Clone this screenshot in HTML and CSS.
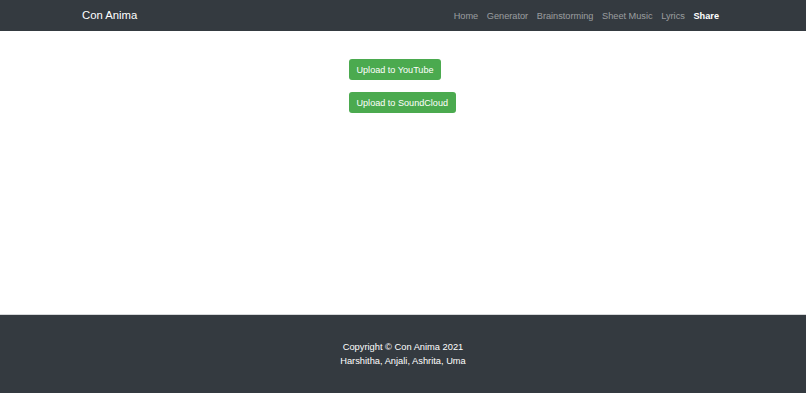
FILE: index.html
```html
<!DOCTYPE html>
<html lang="en">
<head>
    <meta charset="UTF-8">
    <meta name="viewport" content="width=device-width, initial-scale=1.0">
    <title>Con Anima - Share</title>
    <link rel="stylesheet" href="styles.css">
</head>
<body>
    <nav class="navbar">
        <div class="nav-inner">
            <a class="brand" href="#">Con Anima</a>
            <ul class="nav-links">
                <li><a href="#">Home</a></li>
                <li><a href="#">Generator</a></li>
                <li><a href="#">Brainstorming</a></li>
                <li><a href="#">Sheet Music</a></li>
                <li><a href="#">Lyrics</a></li>
                <li><a class="active" href="#">Share</a></li>
            </ul>
        </div>
    </nav>

    <main class="content">
        <div class="share-buttons">
            <button class="btn-upload">Upload to YouTube</button>
            <button class="btn-upload">Upload to SoundCloud</button>
        </div>
    </main>

    <footer class="footer">
        <p>Copyright &copy; Con Anima 2021</p>
        <p>Harshitha, Anjali, Ashrita, Uma</p>
    </footer>
</body>
</html>
```

FILE: styles.css
```css
html, body {
    height: 100%;
}

body {
    font-family: 'Liberation Sans', Arial, sans-serif;
    margin: 0;
    display: flex;
    flex-direction: column;
    background-color: #ffffff;
}

.navbar {
    background-color: #343a40;
    height: 31px;
    flex-shrink: 0;
}

.nav-inner {
    height: 100%;
    display: flex;
    align-items: center;
    justify-content: space-between;
    padding: 0 87px 1px 82px;
    box-sizing: border-box;
}

.brand {
    color: #ffffff;
    font-size: 11.3px;
    line-height: 14px;
    text-decoration: none;
}

.nav-links {
    list-style: none;
    margin: 0;
    padding: 0;
    display: flex;
    gap: 8.6px;
    line-height: 14px;
}

.nav-links a {
    color: rgba(255, 255, 255, 0.5);
    font-size: 9.2px;
    text-decoration: none;
}

.nav-links a.active {
    color: #ffffff;
    font-weight: bold;
}

.content {
    flex: 1;
    padding: 28px 0 0 349px;
}

.share-buttons {
    display: flex;
    flex-direction: column;
    align-items: flex-start;
    gap: 12px;
}

.btn-upload {
    font-family: inherit;
    font-size: 9.1px;
    height: 21px;
    padding: 0 7.5px;
    color: #ffffff;
    background-color: #4baa4f;
    border: none;
    border-radius: 3px;
    cursor: pointer;
}

.footer {
    background-color: #343a40;
    border-top: 1px solid #d6d8da;
    height: 78px;
    flex-shrink: 0;
    display: flex;
    flex-direction: column;
    justify-content: center;
    align-items: center;
    color: #ffffff;
    font-size: 9.3px;
    line-height: 14px;
}

.footer p {
    margin: 0;
}
```
